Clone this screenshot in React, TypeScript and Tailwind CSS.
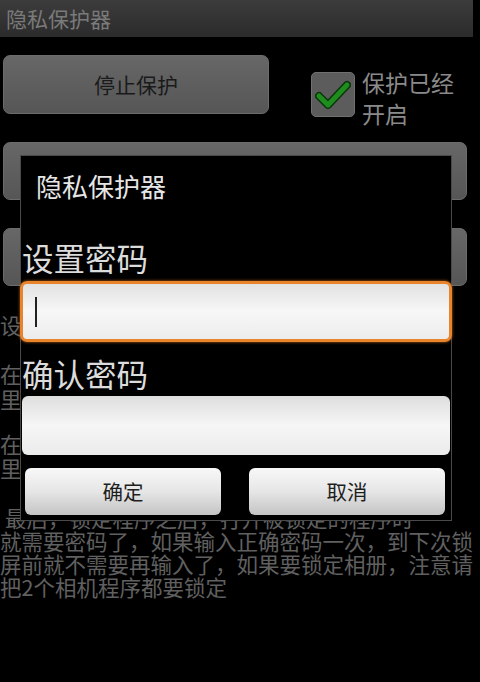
const cjk = { fontFamily: '"Noto Sans CJK SC", "Noto Sans", sans-serif' };

function DimButton({ label, className }: { label: string; className: string }) {
  return (
    <div
      className={`flex items-center justify-center rounded-[7px] border border-[#6c6c6c] bg-gradient-to-b from-[#676767] to-[#565656] text-[21px] text-[#1a1a1a] ${className}`}
    >
      {label}
    </div>
  );
}

function Check() {
  return (
    <div className="mt-[17px] ml-[42px] flex h-[45px] w-[44px] items-center justify-center rounded-[5px] border border-[#707070] bg-[#5c5c5c]">
      <svg width="36" height="30" viewBox="0 0 36 30">
        <path d="M4 16 L13 25 L32 5" fill="none" stroke="#0b360b" strokeWidth="8" strokeLinecap="round" strokeLinejoin="round" />
        <path d="M4 16 L13 25 L32 5" fill="none" stroke="#1e8d1e" strokeWidth="5" strokeLinecap="round" strokeLinejoin="round" />
      </svg>
    </div>
  );
}

export default function App() {
  return (
    <div className="relative h-[682px] w-[480px] overflow-hidden bg-black" style={cjk}>
      {/* page behind the dialog */}
      <div className="flex h-[37px] w-[473px] items-center bg-gradient-to-b from-[#3c3c3c] to-[#2b2b2b] pl-[6px] text-[21px] text-[#7a7a7a]">
        隐私保护器
      </div>

      <div className="mt-[18px] flex h-[59px] items-start">
        <DimButton label="停止保护" className="ml-[3px] h-[59px] w-[266px]" />
        <Check />
        <div className="mt-[12px] ml-[7px] text-[23px] leading-[31px] text-[#8a8a8a]">
          保护已经
          <br />
          开启
        </div>
      </div>

      <DimButton label="开始保护" className="mt-[28px] ml-[3px] h-[58px] w-[464px]" />
      <DimButton label="修改密码" className="mt-[28px] ml-[3px] h-[58px] w-[464px]" />

      <div className="text-[21.5px] text-[#606060]">
        <p className="mt-[27px] whitespace-nowrap leading-[24px]">设置密码后才可以使用锁定功能</p>
        <p className="mt-[24px] whitespace-nowrap leading-[25px]">
          在程序列表中选择需要锁定的程序，点击这里的
          <br />
          里面的复选框即可锁定该程序
        </p>
        <p className="mt-[21px] whitespace-nowrap leading-[24px]">
          在锁定的程序列表里，可以取消锁定该程序号
          <br />
          里面的程序会被解除锁定
        </p>
        <p className="mt-[26px] whitespace-nowrap leading-[23px]">
          <span className="pl-[5px]">最后，锁定程序之后，打开被锁定的程序时</span>
          <br />
          就需要密码了，如果输入正确密码一次，到下次锁
          <br />
          屏前就不需要再输入了，如果要锁定相册，注意请
          <br />
          把2个相机程序都要锁定
        </p>
      </div>

      {/* dialog */}
      <div className="absolute top-[155px] left-[20px] flex h-[366px] w-[432px] flex-col border border-[#4a4a4a] bg-black">
        <div className="mt-[14px] pl-[15px] text-[26px] leading-[32px] text-[#e6e6e6]">隐私保护器</div>

        <div className="mt-[37px] pl-[1px] text-[31.5px] leading-[36px] text-[#dcdcdc]">设置密码</div>
        <div className="mt-[6px] -mx-px flex h-[61px] items-center rounded-[7px] border-[3px] border-[#e8852c] bg-gradient-to-b from-[#e2e2e2] via-[#f7f7f7] to-[#ececec] pl-[12px] shadow-[0_0_3px_#c86a1a]">
          <div className="h-[30px] w-[2px] bg-[#222]" />
        </div>

        <div className="mt-[13px] pl-[1px] text-[31.5px] leading-[36px] text-[#dcdcdc]">确认密码</div>
        <div className="mt-[5px] mx-[1px] h-[59px] rounded-[6px] bg-gradient-to-b from-[#dedede] via-[#f6f6f6] to-[#ebebeb]" />

        <div className="mt-[13px] flex gap-[28px] px-[4px]">
          <div className="flex h-[47px] w-[196px] items-center justify-center rounded-[6px] bg-gradient-to-b from-[#f8f8f8] via-[#e6e6e6] to-[#c4c4c4] text-[20.5px] text-[#1e1e1e]">
            确定
          </div>
          <div className="flex h-[47px] w-[196px] items-center justify-center rounded-[6px] bg-gradient-to-b from-[#f8f8f8] via-[#e6e6e6] to-[#c4c4c4] text-[20.5px] text-[#1e1e1e]">
            取消
          </div>
        </div>
      </div>
    </div>
  );
}
